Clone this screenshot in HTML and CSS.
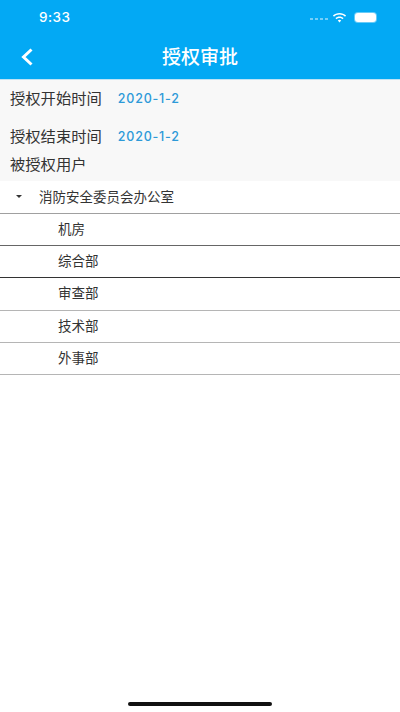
FILE: index.html
```html
<!DOCTYPE html>
<html lang="zh">
<head>
<meta charset="utf-8">
<title>授权审批</title>
<link rel="stylesheet" href="styles.css">
</head>
<body>
<div class="app">
  <header class="header">
    <div class="status">
      <span class="time">9:33</span>
      <div class="status-icons">
        <span class="dots"><i></i><i></i><i></i><i></i></span>
        <svg class="wifi" width="15" height="11" viewBox="0 0 15 11"><path d="M7.5 1C4.9 1 2.6 2 .9 3.6l1.100 1.200C3.400 3.400 5.400 2.600 7.500 2.600s4.100.8 5.500 2.200l1.100-1.200C12.400 2 10.100 1 7.500 1zM3.400 6.100l1.100 1.200C5.300 6.600 6.300 6.100 7.500 6.100s2.200.5 3 1.200l1.100-1.200C10.500 5.100 9.100 4.500 7.500 4.500s-3 .6-4.100 1.600zM5.800 8.500l1.700 1.900 1.700-1.900c-.5-.4-1.100-.7-1.700-.7s-1.200.3-1.700.7z" fill="#fff"/></svg>
        <span class="battery"></span>
      </div>
    </div>
    <div class="nav">
      <svg class="back" width="14" height="18" viewBox="0 0 14 18"><path d="M11.500 1.500L3.500 9l8 7.500" fill="none" stroke="#fff" stroke-width="3"/></svg>
      <h1 class="title">授权审批</h1>
    </div>
  </header>
  <section class="form">
    <div class="field field-start"><span class="label">授权开始时间</span><span class="date">2020-1-2</span></div>
    <div class="field field-end"><span class="label">授权结束时间</span><span class="date">2020-1-2</span></div>
    <div class="label users">被授权用户</div>
  </section>
  <ul class="tree">
    <li class="row parent"><span class="caret"></span><span>消防安全委员会办公室</span></li>
    <li class="row child line-mid">机房</li>
    <li class="row child line-dark">综合部</li>
    <li class="row child">审查部</li>
    <li class="row child">技术部</li>
    <li class="row child">外事部</li>
  </ul>
  <div class="home-bar"></div>
</div>
</body>
</html>
```
FILE: styles.css
```css
* { box-sizing: border-box; }
html, body { margin: 0; padding: 0; }
body { background: #fff; font-family: "Noto Sans CJK SC", "Liberation Sans", sans-serif; color: #222; }
.app { width: 400px; height: 712px; position: relative; overflow: hidden; background: #fff; }
.header { background: #03a9f4; height: 79px; color: #fff; }
.status { height: 35px; display: flex; align-items: center; justify-content: space-between; padding: 0 24px 0 39px; }
.time { font: 500 13.500px/1 "Inter", "Liberation Sans", sans-serif; letter-spacing: .5px; }
.status-icons { display: flex; align-items: center; gap: 5px; }
.dots { display: flex; gap: 2px; opacity: .45; margin-top: 3px; }
.dots i { width: 3px; height: 2px; background: #fff; display: block; }
.wifi { display: block; margin-left: -1px; }
.battery { width: 21px; height: 9px; border-radius: 3px; background: #fff; box-shadow: 0 0 0 1px rgba(255,255,255,.4); margin-left: 3px; }
.nav { height: 44px; position: relative; display: flex; align-items: center; justify-content: center; padding-bottom: 3px; }
.back { position: absolute; left: 20px; top: 13px; }
.title { margin: 0; font-size: 19px; line-height: 26px; font-weight: 500; }
.form { background: #f8f8f8; height: 102px; border-top: 1px solid #bfe3f5; font-size: 15.300px; }
.field { display: flex; align-items: center; padding-left: 10px; height: 24px; }
.field-start { margin-top: 5px; }
.field-end { margin-top: 14px; }
.label { line-height: 24px; color: #333; }
.users { padding-left: 10px; margin-top: 4px; }
.date { margin-left: 16px; margin-top: 4px; color: #2d9ad8; font: 500 12.500px/1 "Inter", "Liberation Sans", sans-serif; letter-spacing: .8px; }
.tree { list-style: none; margin: 0; padding: 0; }
.row { height: 32.200px; display: flex; align-items: center; font-size: 13.500px; color: #333; border-bottom: 1px solid #b5b5b5; padding-bottom: 3px; }
.parent { height: 33px; padding-left: 16px; padding-bottom: 2px; border-bottom-color: #a0a0a0; }
.caret { width: 0; height: 0; border-left: 3.500px solid transparent; border-right: 3.500px solid transparent; border-top: 3.500px solid #333; margin-right: 17px; }
.child { padding-left: 58px; }
.line-mid { border-bottom-color: #666; }
.line-dark { border-bottom-color: #333; }
.home-bar { position: absolute; left: 128px; top: 702px; width: 144px; height: 4px; border-radius: 2px; background: #111; }
```
